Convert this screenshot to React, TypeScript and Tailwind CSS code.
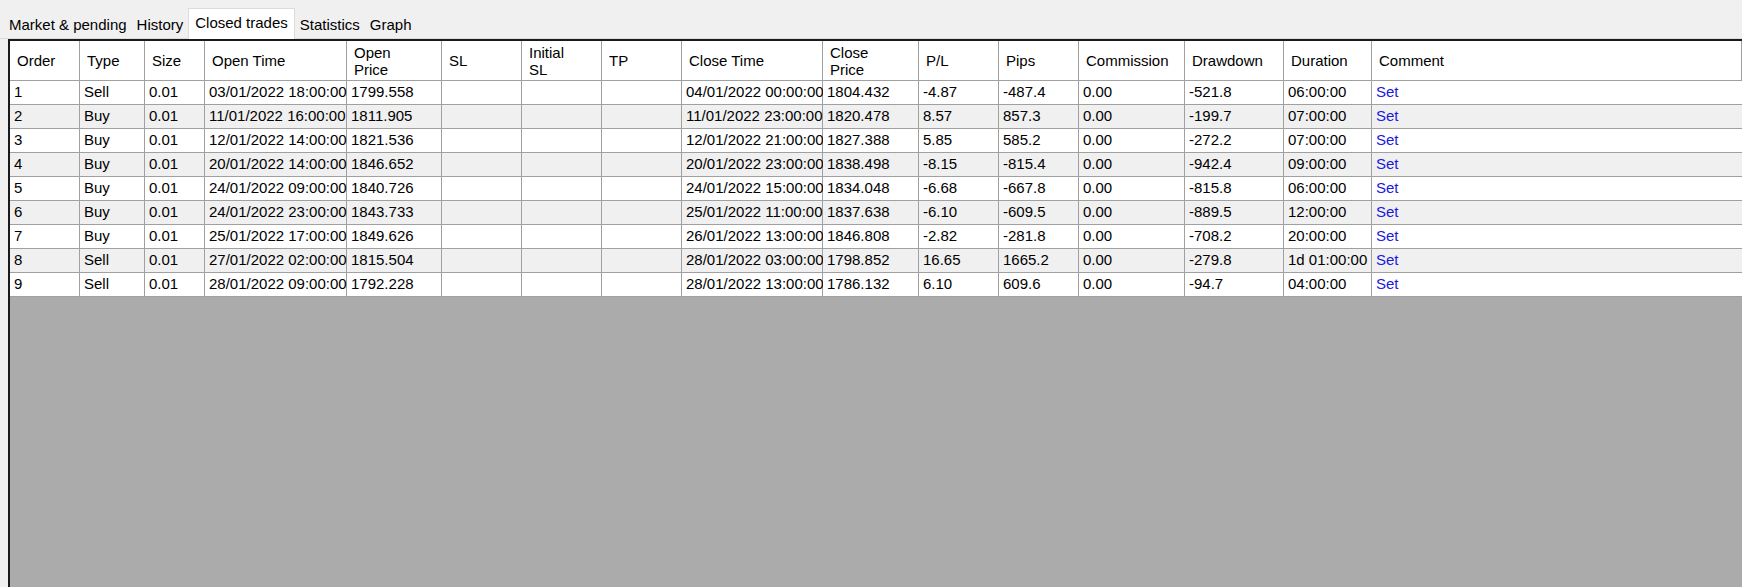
const widths = [70, 65, 60, 142, 95, 80, 80, 80, 141, 96, 80, 80, 106, 99, 88];
const heads = ["Order", "Type", "Size", "Open Time", "Open\nPrice", "SL", "Initial\nSL", "TP", "Close Time", "Close\nPrice", "P/L", "Pips", "Commission", "Drawdown", "Duration", "Comment"];
const rows = [
  ["1","Sell","0.01","03/01/2022 18:00:00","1799.558","","","","04/01/2022 00:00:00","1804.432","-4.87","-487.4","0.00","-521.8","06:00:00"],
  ["2","Buy","0.01","11/01/2022 16:00:00","1811.905","","","","11/01/2022 23:00:00","1820.478","8.57","857.3","0.00","-199.7","07:00:00"],
  ["3","Buy","0.01","12/01/2022 14:00:00","1821.536","","","","12/01/2022 21:00:00","1827.388","5.85","585.2","0.00","-272.2","07:00:00"],
  ["4","Buy","0.01","20/01/2022 14:00:00","1846.652","","","","20/01/2022 23:00:00","1838.498","-8.15","-815.4","0.00","-942.4","09:00:00"],
  ["5","Buy","0.01","24/01/2022 09:00:00","1840.726","","","","24/01/2022 15:00:00","1834.048","-6.68","-667.8","0.00","-815.8","06:00:00"],
  ["6","Buy","0.01","24/01/2022 23:00:00","1843.733","","","","25/01/2022 11:00:00","1837.638","-6.10","-609.5","0.00","-889.5","12:00:00"],
  ["7","Buy","0.01","25/01/2022 17:00:00","1849.626","","","","26/01/2022 13:00:00","1846.808","-2.82","-281.8","0.00","-708.2","20:00:00"],
  ["8","Sell","0.01","27/01/2022 02:00:00","1815.504","","","","28/01/2022 03:00:00","1798.852","16.65","1665.2","0.00","-279.8","1d 01:00:00"],
  ["9","Sell","0.01","28/01/2022 09:00:00","1792.228","","","","28/01/2022 13:00:00","1786.132","6.10","609.6","0.00","-94.7","04:00:00"],
];
export default function App() {
  const tpl = widths.map((w) => w + "px").join(" ") + " 1fr";
  return (
    <div className="w-[1742px] h-[587px] bg-[#f0f0f0] flex flex-col text-[15px] text-black overflow-hidden" style={{ fontFamily: "'Liberation Sans', Arial, sans-serif" }}>
      <div className="h-[39px] flex items-end pl-[4px] border-b border-[#dcdcdc]">
        {["Market & pending", "History", "Closed trades", "Statistics", "Graph"].map((t) => (
          <div key={t} className={t === "Closed trades" ? "px-[6px] h-[31px] pt-[3px] bg-white border border-b-0 border-[#dcdcdc] mb-[-1px]" : "px-[5px] h-[27px] pt-[3px]"}>{t}</div>
        ))}
      </div>
      <div className="flex-1 ml-[8px] border-l-2 border-t-2 border-[#1a1a1a] bg-[#ababab] flex flex-col">
        <div className="grid bg-white" style={{ gridTemplateColumns: tpl }}>
          {heads.map((h, i) => (
            <div key={i} className="h-[40px] border-r border-b border-[#a0a0a0] last:border-r-0 flex items-center px-[7px] leading-[17px] whitespace-pre">{h}</div>
          ))}
          {rows.map((r, ri) => (
            [...r, "Set"].map((c, ci) => (
              <div key={ri + "-" + ci} className={"h-[24px] border-r border-b border-[#a0a0a0] flex items-center px-[4px] whitespace-nowrap " + (ri % 2 ? "bg-[#f0f0f0] " : "bg-white ") + (ci === 15 ? "text-[#1a1adc] border-r-0" : "")}>{c}</div>
            ))
          ))}
        </div>
      </div>
    </div>
  );
}
